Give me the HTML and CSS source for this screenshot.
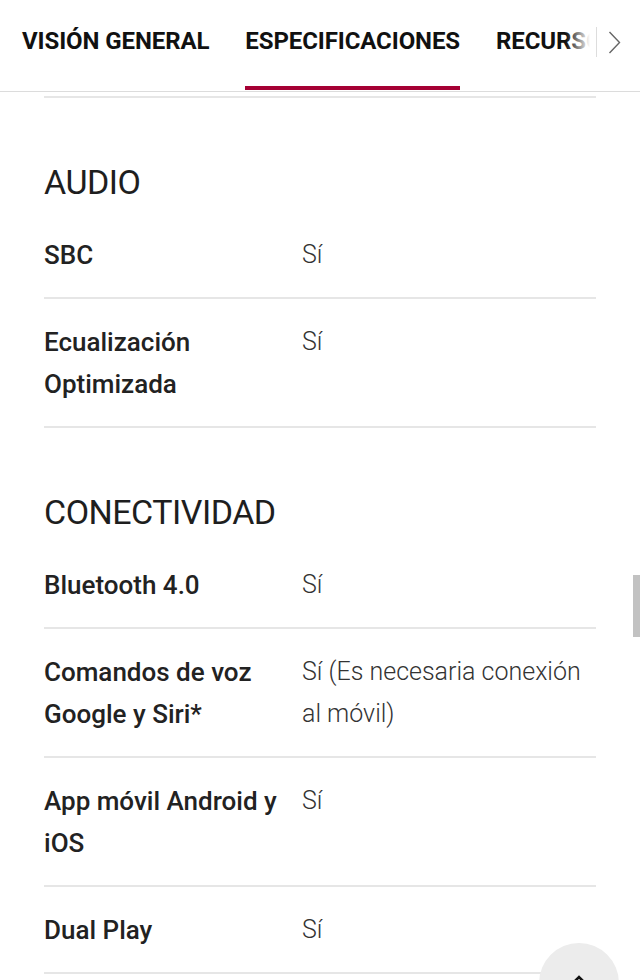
FILE: index.html
```html
<!DOCTYPE html>
<html lang="es">
<head>
<meta charset="UTF-8">
<meta name="viewport" content="width=device-width, initial-scale=1.0">
<title>Especificaciones</title>
<link rel="stylesheet" href="styles.css">
</head>
<body>
<div class="header">
    <div class="tabs">
        <a class="tab">VISIÓN GENERAL</a>
        <a class="tab active">ESPECIFICACIONES</a>
        <a class="tab">RECURSOS</a>
    </div>
    <div class="tab-next">
        <span class="sep"></span>
        <svg width="13" height="23" viewBox="0 0 13 23">
            <polyline points="1.5,1 11.5,11.5 1.5,22" fill="none" stroke="#666" stroke-width="1.4"/>
        </svg>
    </div>
</div>

<div class="specs">
    <div class="top-line"></div>

    <div class="section">
        <h3>AUDIO</h3>
        <div class="row">
            <div class="label">SBC</div>
            <div class="value">Sí</div>
        </div>
        <div class="row">
            <div class="label">Ecualización Optimizada</div>
            <div class="value">Sí</div>
        </div>
    </div>

    <div class="section">
        <h3>CONECTIVIDAD</h3>
        <div class="row">
            <div class="label">Bluetooth 4.0</div>
            <div class="value">Sí</div>
        </div>
        <div class="row">
            <div class="label">Comandos de voz Google y Siri*</div>
            <div class="value">Sí (Es necesaria conexión al móvil)</div>
        </div>
        <div class="row">
            <div class="label">App móvil Android y iOS</div>
            <div class="value">Sí</div>
        </div>
        <div class="row">
            <div class="label">Dual Play</div>
            <div class="value">Sí</div>
        </div>
    </div>
</div>

<!-- overlays -->
<div class="scroll-thumb"></div>
<a class="to-top">
    <svg width="24" height="14" viewBox="0 0 24 14">
        <polyline points="2,12 12,2 22,12" fill="none" stroke="#111" stroke-width="2.6"/>
    </svg>
</a>
</body>
</html>
```

FILE: styles.css
```css
body {
    font-family: Roboto, "Noto Sans", sans-serif;
    margin: 0;
    padding: 0;
    background-color: #fff;
    color: #222;
    overflow: hidden;
}

.header {
    display: flex;
    align-items: flex-start;
    height: 91px;
    border-bottom: 1px solid #dcdcdc;
    background-color: #fff;
}

.tabs {
    position: relative;
    flex: 1;
    display: flex;
    gap: 36px;
    padding-left: 22px;
    overflow: hidden;
    white-space: nowrap;
}

.tabs::after {
    content: "";
    position: absolute;
    top: 0;
    right: 0;
    width: 30px;
    height: 100%;
    background: linear-gradient(to right, rgba(255, 255, 255, 0), #fff 80%);
}

.tab {
    flex-shrink: 0;
    display: flex;
    align-items: center;
    height: 82px;
    padding-bottom: 4px;
    border-bottom: 4px solid transparent;
    font-size: 24px;
    font-weight: 700;
    color: #111;
    letter-spacing: -0.1px;
}

.tab.active {
    border-bottom-color: #a50034;
}

.tab-next {
    width: 44px;
    height: 84px;
    display: flex;
    align-items: center;
}

.tab-next .sep {
    width: 1px;
    height: 30px;
    background-color: #ddd;
    margin-right: 11px;
}

.specs {
    padding: 0 44px;
}

.top-line {
    margin-top: 4px;
    border-top: 2px solid #e6e6e6;
}

.section h3 {
    margin: 64px 0 10px;
    font-size: 34px;
    line-height: 40px;
    font-weight: 400;
    letter-spacing: -0.5px;
    color: #1e1e1e;
}

.row {
    display: grid;
    grid-template-columns: 258px 1fr;
    padding: 22px 0 21px;
    border-bottom: 2px solid #e6e6e6;
    line-height: 42px;
}

.label {
    font-size: 26px;
    font-weight: 500;
    color: #222;
}

.value {
    font-size: 25px;
    font-weight: 300;
    color: #333;
    padding-right: 12px;
}

.scroll-thumb {
    position: fixed;
    left: 633px;
    top: 575px;
    width: 7px;
    height: 62px;
    background-color: #c2c2c2;
}

.to-top {
    position: fixed;
    left: 539px;
    top: 943px;
    width: 80px;
    height: 80px;
    border-radius: 50%;
    background-color: #ececec;
    display: flex;
    justify-content: center;
    align-items: flex-start;
}

.to-top svg {
    margin-top: 32px;
}
```
